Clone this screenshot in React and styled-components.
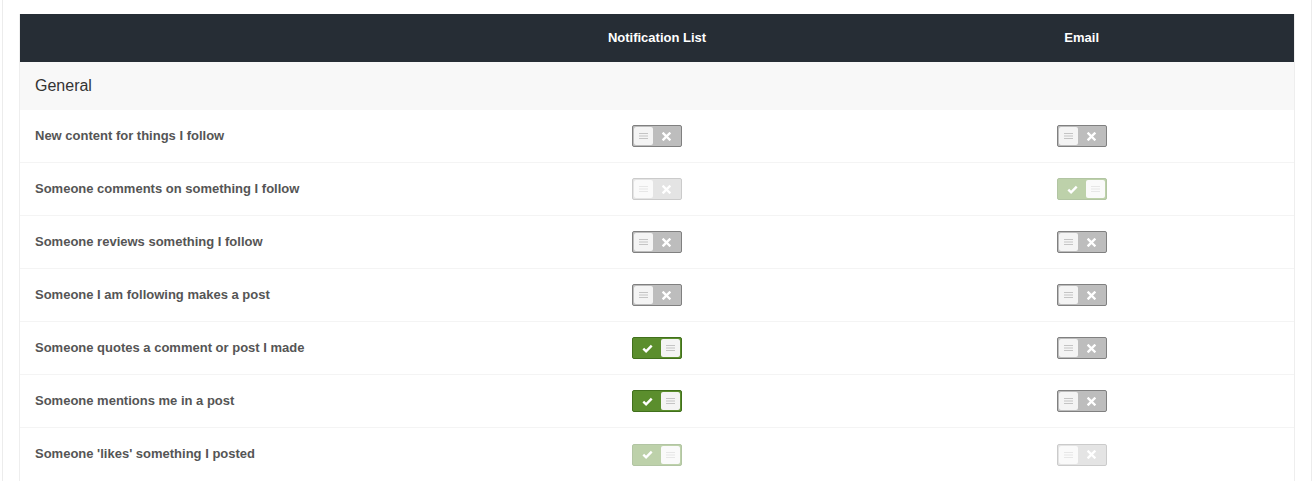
import React from 'react';
import styled, { createGlobalStyle } from 'styled-components';

const Global = createGlobalStyle`
  body {
    margin: 0;
    background: #fff;
    font-family: "Liberation Sans", Arial, sans-serif;
  }
`;

const Panel = styled.div`
  margin-left: 2px;
  width: 1310px;
  border-left: 1px solid #ececec;
  border-right: 1px solid #ececec;
  padding: 14px 16px 0;
  box-sizing: border-box;
  height: 481px;
`;

const Table = styled.div`
  border: 1px solid #eeeeee;
  border-top: none;
`;

const Row = styled.div`
  display: grid;
  grid-template-columns: 1fr 1fr 1fr;
  align-items: center;
  height: ${p => p.h || 53}px;
  background: ${p => p.bg || '#fff'};
  border-bottom: ${p => (p.last ? 'none' : '1px solid #f4f4f4')};
  box-sizing: border-box;
`;

const HeadCell = styled.div`
  color: #fff;
  font-weight: bold;
  font-size: 13px;
  text-align: center;
  padding-bottom: 2px;
`;

const Section = styled.div`
  grid-column: 1 / span 3;
  padding-left: 15px;
  font-size: 16px;
  color: #333;
  padding-bottom: 1px;
`;

const Label = styled.div`
  padding-left: 15px;
  font-size: 13px;
  font-weight: bold;
  color: #555;
  padding-bottom: 2px;
`;

const Cell = styled.div`
  display: flex;
  justify-content: center;
`;

const Switch = styled.div`
  width: 50px;
  height: 22px;
  box-sizing: border-box;
  border-radius: 2px;
  border: 1px solid ${p => (p.on ? '#41701c' : '#808080')};
  background: ${p => (p.on ? '#5b8e2d' : '#bdbdbd')};
  display: flex;
  flex-direction: ${p => (p.on ? 'row-reverse' : 'row')};
  align-items: center;
  padding: 1px;
  opacity: ${p => (p.disabled ? 0.4 : 1)};
`;

const Knob = styled.div`
  width: 19px;
  height: 18px;
  border-radius: 2px;
  background: #f4f4f4;
  display: flex;
  align-items: center;
  justify-content: center;
`;

const Mark = styled.div`
  flex: 1;
  display: flex;
  align-items: center;
  justify-content: center;
`;

const Lines = () => (
  <svg width="9" height="8" viewBox="0 0 9 8">
    <path d="M0 1.5h9M0 4h9M0 6.5h9" stroke="#c4c4c4" strokeWidth="1" />
  </svg>
);

const Cross = () => (
  <svg width="9" height="9" viewBox="0 0 9 9">
    <path d="M1.5 1.5l6 6M7.5 1.5l-6 6" stroke="#fff" strokeWidth="2.4" strokeLinecap="square" />
  </svg>
);

const Check = () => (
  <svg width="11" height="9" viewBox="0 0 11 9">
    <path d="M1.3 4.6l2.8 2.7L9.7 1.6" stroke="#fff" strokeWidth="2.4" fill="none" />
  </svg>
);

const Toggle = ({ on, disabled }) => (
  <Switch on={on} disabled={disabled}>
    <Knob><Lines /></Knob>
    <Mark>{on ? <Check /> : <Cross />}</Mark>
  </Switch>
);

const rows = [
  ['New content for things I follow', [false, false], [false, false]],
  ['Someone comments on something I follow', [false, true], [true, true]],
  ['Someone reviews something I follow', [false, false], [false, false]],
  ['Someone I am following makes a post', [false, false], [false, false]],
  ['Someone quotes a comment or post I made', [true, false], [false, false]],
  ['Someone mentions me in a post', [true, false], [false, false]],
  ["Someone 'likes' something I posted", [true, true], [false, true]],
];

export default function App() {
  return (
    <>
      <Global />
      <Panel>
        <Table>
          <Row h={48} bg="#262d35" last>
            <div />
            <HeadCell>Notification List</HeadCell>
            <HeadCell>Email</HeadCell>
          </Row>
          <Row h={48} bg="#f8f8f8" last>
            <Section>General</Section>
          </Row>
          {rows.map(([label, a, b], i) => (
            <Row key={label} last={i === rows.length - 1}>
              <Label>{label}</Label>
              <Cell><Toggle on={a[0]} disabled={a[1]} /></Cell>
              <Cell><Toggle on={b[0]} disabled={b[1]} /></Cell>
            </Row>
          ))}
        </Table>
      </Panel>
    </>
  );
}
